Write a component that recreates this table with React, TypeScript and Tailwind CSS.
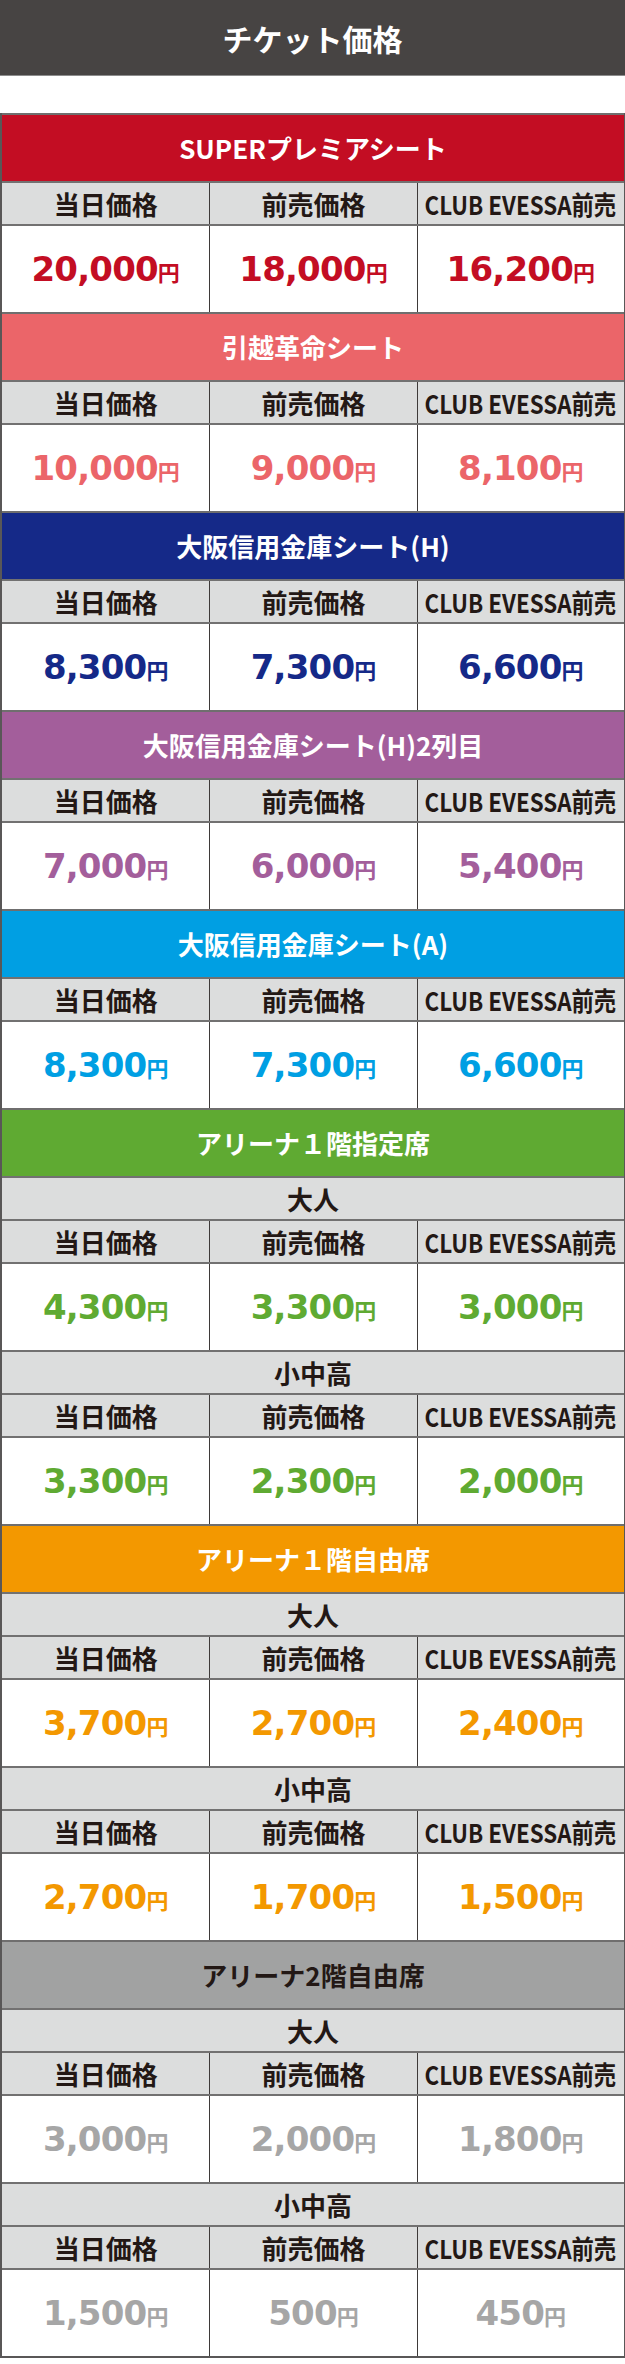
import React from "react";

type Block = { label?: string; prices: string[] };

interface Section {
  title: string;
  headBg: string;
  headText: string;
  priceText: string;
  blocks: Block[];
}

const sections: Section[] = [
  {
    title: "SUPERプレミアシート",
    headBg: "bg-[#c30d23]",
    headText: "text-white",
    priceText: "text-[#c30d23]",
    blocks: [{ prices: ["20,000", "18,000", "16,200"] }],
  },
  {
    title: "引越革命シート",
    headBg: "bg-[#eb6569]",
    headText: "text-white",
    priceText: "text-[#eb6569]",
    blocks: [{ prices: ["10,000", "9,000", "8,100"] }],
  },
  {
    title: "大阪信用金庫シート(H)",
    headBg: "bg-[#152988]",
    headText: "text-white",
    priceText: "text-[#152988]",
    blocks: [{ prices: ["8,300", "7,300", "6,600"] }],
  },
  {
    title: "大阪信用金庫シート(H)2列目",
    headBg: "bg-[#a35e9b]",
    headText: "text-white",
    priceText: "text-[#a35e9b]",
    blocks: [{ prices: ["7,000", "6,000", "5,400"] }],
  },
  {
    title: "大阪信用金庫シート(A)",
    headBg: "bg-[#009fe3]",
    headText: "text-white",
    priceText: "text-[#009fe3]",
    blocks: [{ prices: ["8,300", "7,300", "6,600"] }],
  },
  {
    title: "アリーナ１階指定席",
    headBg: "bg-[#5faa32]",
    headText: "text-white",
    priceText: "text-[#5faa32]",
    blocks: [
      { label: "大人", prices: ["4,300", "3,300", "3,000"] },
      { label: "小中高", prices: ["3,300", "2,300", "2,000"] },
    ],
  },
  {
    title: "アリーナ１階自由席",
    headBg: "bg-[#f39800]",
    headText: "text-white",
    priceText: "text-[#f39800]",
    blocks: [
      { label: "大人", prices: ["3,700", "2,700", "2,400"] },
      { label: "小中高", prices: ["2,700", "1,700", "1,500"] },
    ],
  },
  {
    title: "アリーナ2階自由席",
    headBg: "bg-[#a1a2a2]",
    headText: "text-[#231815]",
    priceText: "text-[#a6a6a6]",
    blocks: [
      { label: "大人", prices: ["3,000", "2,000", "1,800"] },
      { label: "小中高", prices: ["1,500", "500", "450"] },
    ],
  },
];

const cols = ["当日価格", "前売価格", "CLUB EVESSA前売"];

function ColHeaders() {
  return (
    <div className="grid grid-cols-3 h-[43px] border-t-2 border-[#727171] bg-[#dcdddd]">
      {cols.map((c, i) => (
        <div
          key={c}
          className={`flex items-center justify-center overflow-visible text-[26px] font-bold leading-none ${
            i > 0 ? "border-l border-[#3e3a39]" : ""
          }`}
        >
          {i === 2 ? (
            <span className="inline-block whitespace-nowrap scale-x-[0.86]">{c}</span>
          ) : (
            c
          )}
        </div>
      ))}
    </div>
  );
}

function PriceRow({ prices, color }: { prices: string[]; color: string }) {
  return (
    <div className="grid grid-cols-3 h-[88px] border-t-2 border-[#727171] bg-white">
      {prices.map((p, i) => (
        <div
          key={i}
          className={`flex items-center justify-center ${color} ${i > 0 ? "border-l border-[#3e3a39]" : ""}`}
        >
          <span className="flex items-baseline leading-none">
            <span className="font-['DejaVu_Sans',sans-serif] text-[34px] font-bold tracking-[-0.8px]">{p}</span>
            <span className="text-[22px] font-bold">円</span>
          </span>
        </div>
      ))}
    </div>
  );
}

export default function App() {
  return (
    <div className="w-[625px] bg-white font-['Noto_Sans_CJK_JP',sans-serif] text-[#231815]">
      {/* title bar */}
      <div className="h-[76px] bg-[#474443] border-b border-[#8c8c8c] flex items-center justify-center text-white text-[30px] font-bold leading-none">
        チケット価格
      </div>
      <div className="h-[37px]" />

      <div className="border-l-2 border-r border-b-2 border-[#595757]">
        {sections.map((s) => (
          <div key={s.title}>
            <div
              className={`h-[68px] border-t-2 border-[#6f6e6e] flex items-center justify-center text-[26px] font-bold leading-none ${s.headBg} ${s.headText}`}
            >
              {s.title}
            </div>
            {s.blocks.map((b, bi) => (
              <div key={bi}>
                {b.label && (
                  <div className="h-[43px] border-t-2 border-[#727171] bg-[#dcdddd] flex items-center justify-center text-[26px] font-bold leading-none">
                    {b.label}
                  </div>
                )}
                <ColHeaders />
                <PriceRow prices={b.prices} color={s.priceText} />
              </div>
            ))}
          </div>
        ))}
      </div>
    </div>
  );
}
